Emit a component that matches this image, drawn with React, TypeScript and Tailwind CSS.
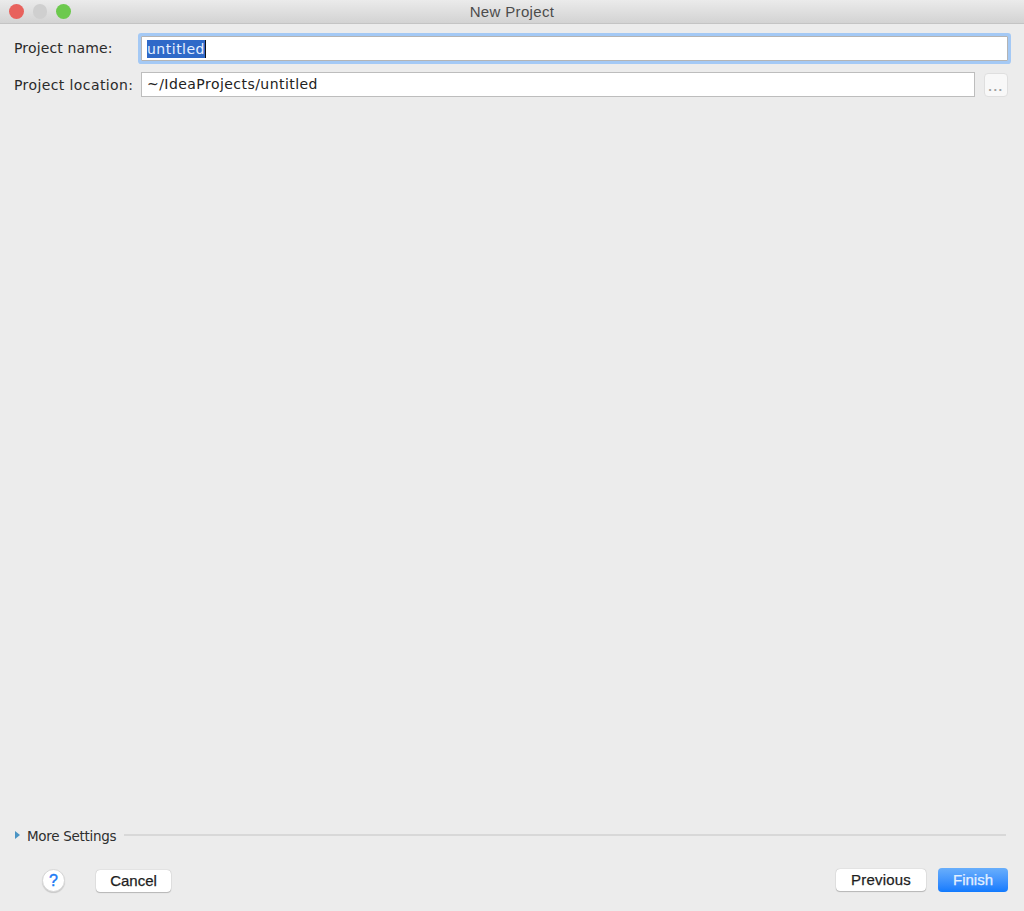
const formFont = "font-['DejaVu_Sans',sans-serif] text-[14px]";
const labelClass = `${formFont} text-[#2a2a2a]`;
const whiteShadow = "bg-white shadow-[0_0_1px_rgba(0,0,0,0.35),0_1px_1px_rgba(0,0,0,0.2)]";

function MacButton({ label, className }: { label: string; className: string }) {
  return (
    <button
      className={`flex items-center justify-center rounded-[4px] text-[15px] [-webkit-text-stroke:0.25px] ${className}`}
    >
      {label}
    </button>
  );
}

export default function App() {
  return (
    <div className="flex h-[911px] w-[1024px] flex-col overflow-hidden bg-[#ececec] font-['Liberation_Sans',sans-serif]">
      {/* title bar */}
      <div className="relative flex h-[24px] shrink-0 items-center justify-center border-b border-[#c4c4c4] bg-gradient-to-b from-[#ebebeb] to-[#d3d3d3] pt-[1px]">
        <div className="absolute left-[9px] top-[4px] flex gap-[9px]">
          <div className="h-[14.5px] w-[14.5px] rounded-full bg-[#e8615c]" />
          <div className="h-[14.5px] w-[14.5px] rounded-full bg-[#cfcfcf]" />
          <div className="h-[14.5px] w-[14.5px] rounded-full bg-[#6cc94d]" />
        </div>
        <span className="text-[15px] tracking-[0.35px] text-[#4c4c4c]">New Project</span>
      </div>

      {/* form */}
      <div className="flex flex-col gap-[11px] pl-[14px] pr-[16px] pt-[12px]">
        <div className="flex items-center">
          <label className={`w-[127px] tracking-[0.15px] ${labelClass}`}>Project name:</label>
          <div className="flex h-[25px] flex-1 items-center rounded-[1px] border border-[#b4b4b4] bg-white pl-[5px] shadow-[0_0_0_3px_#a4c9f5]">
            <span className={`border-r border-[#111] bg-[#2f69c8] leading-[18px] tracking-[0.5px] text-[#e6efff] ${formFont}`}>
              untitled
            </span>
          </div>
        </div>
        <div className="flex items-center">
          <label className={`w-[127px] pt-[1px] tracking-[0.4px] ${labelClass}`}>Project location:</label>
          <div className={`flex h-[25px] w-[834px] items-center border border-[#bdbdbd] bg-white pl-[5px] tracking-[0.45px] text-[#222] ${formFont}`}>
            ~/IdeaProjects/untitled
          </div>
          <button className="ml-[9px] flex h-[24px] flex-1 items-end justify-center rounded-[4px] border border-[#dfdfdf] bg-[#f8f8f8] pb-[1px] text-[13px] font-bold leading-[16px] tracking-[1.5px] text-[#a0a0a0]">
            ...
          </button>
        </div>
      </div>

      <div className="flex-1" />

      {/* more settings */}
      <div className="flex items-center pl-[15px] pr-[18px]">
        <svg width="5" height="8" viewBox="0 0 5 8" className="shrink-0">
          <polygon points="0,0 5,4 0,8" fill="#4a94c4" />
        </svg>
        <span className="ml-[7px] pt-[1px] font-['DejaVu_Sans',sans-serif] text-[13.5px] tracking-[-0.3px] text-[#2f2f2f]">More Settings</span>
        <div className="ml-[8px] h-[2px] flex-1 bg-[#d8d8d8]" />
      </div>

      {/* footer */}
      <div className="flex items-center pb-[19px] pl-[42px] pr-[16px] pt-[22px]">
        <button className="mt-[1px] flex h-[23px] w-[23px] items-center justify-center rounded-full border border-[#d6d6d6] bg-white text-[16px] text-[#1a7af5] shadow-[0_1px_1px_rgba(0,0,0,0.15)] [-webkit-text-stroke:0.4px]">
          ?
        </button>
        <MacButton label="Cancel" className={`ml-[31px] mt-[2px] h-[22px] w-[75px] text-[#1d1d1d] ${whiteShadow}`} />
        <div className="flex-1" />
        <MacButton label="Previous" className={`h-[22px] w-[90px] tracking-[0.2px] text-[#1d1d1d] ${whiteShadow}`} />
        <MacButton
          label="Finish"
          className="ml-[12px] h-[24px] w-[70px] bg-gradient-to-b from-[#68aefb] to-[#0f7afe] text-[#e4f0ff]"
        />
      </div>
    </div>
  );
}
